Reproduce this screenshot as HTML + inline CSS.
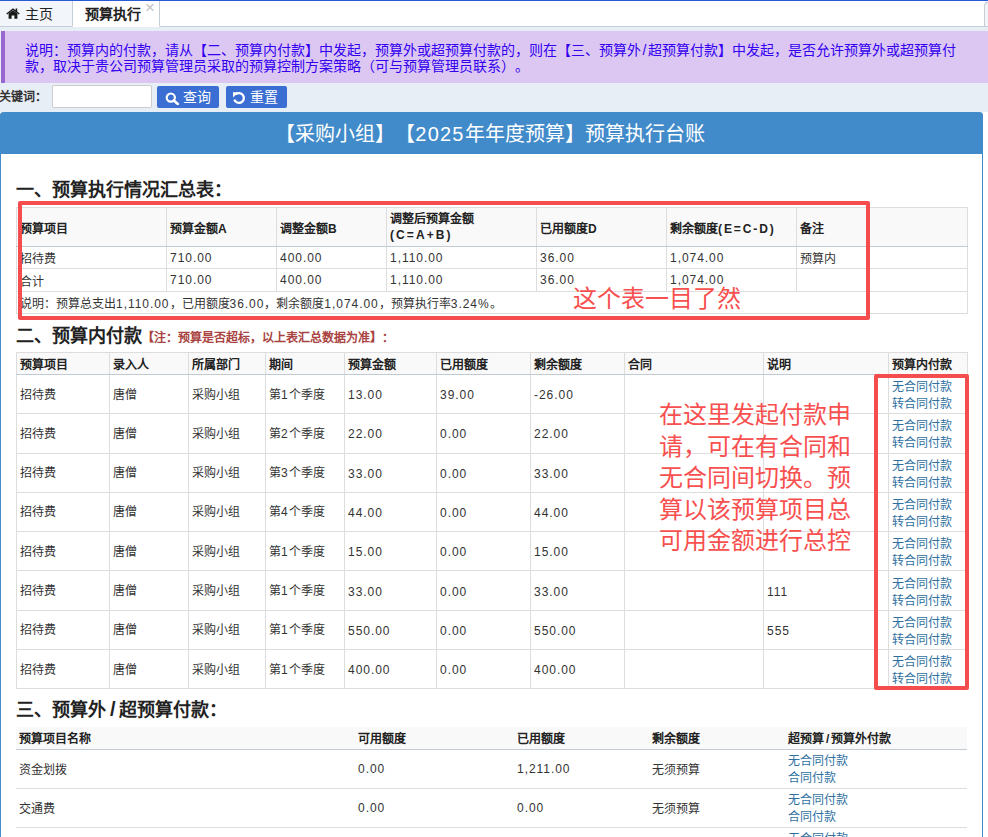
<!DOCTYPE html>
<html lang="zh-CN">
<head>
<meta charset="utf-8">
<style>
*{box-sizing:border-box}
html,body{margin:0;padding:0}
body{text-spacing-trim:space-all;width:988px;height:837px;overflow:hidden;position:relative;background:#fff;font-family:"Liberation Sans",sans-serif;font-size:12px;color:#333}
.abs{position:absolute}
.n{letter-spacing:0.96px}
/* tab bar */
#tabbar{left:0;top:0;width:988px;height:27px;background:#e8eef5;border-top:1px solid #2a5bd7}
#tab-home{left:0;top:0;width:73px;height:26px;background:#f2f5f9;border-right:1px solid #c5ced6;border-bottom:1px solid #c5ced6;border-bottom-right-radius:2px;font-size:14px;line-height:26px;color:#222}
#tab-home .t{position:absolute;left:25px;top:0}
#tab-act{left:73px;top:0;width:86px;height:26px;background:#fff;font-size:14px;font-weight:bold;line-height:26px;color:#222}
#tab-act .t{position:absolute;left:12px;top:0}
#tab-act .x{position:absolute;left:72px;top:-6px;font-size:17px;color:#c4c4c4;font-weight:normal}
#tab-rest{left:159px;top:0;width:826px;height:26px;background:#fff;border-left:1px solid #c5ced6;border-bottom:1px solid #c5ced6;border-radius:0 0 2px 2px}
#tab-end{left:984px;top:1px;width:10px;height:25px;background:#f2f5f9;border-top:1px solid #c5ced6;border-left:1px solid #c5ced6;border-bottom:1px solid #c5ced6;border-top-left-radius:4px}
#strip{left:0;top:27px;width:988px;height:85px;background:#e8eef5}
/* notice */
#notice{left:1px;top:31px;width:987px;height:52px;background:#dcc7f3;border-left:4px solid #9a66cf;color:#3300f0;font-size:14px;line-height:16px;padding:11px 0 0 20px}
/* search */
#kw{left:-1px;top:85px;font-size:12px;font-weight:bold;line-height:24px;color:#333}
#kwin{left:52px;top:85px;width:100px;height:23px;background:#fff;border:1px solid #ccc;border-radius:2px}
.btn{top:86px;height:22px;background:#3a6ed2;border-radius:2px;color:#fff;font-size:14px;line-height:22px}
#b1{left:157px;width:62px}
#b2{left:226px;width:61px}
.btn .t{position:absolute;top:0}
/* panel */
#panel{left:0;top:112px;width:983px;height:740px;border:1px solid #428bca;border-top:none;border-radius:4px 4px 0 0;background:#fff}
#phead{left:0;top:112px;width:983px;height:42px;background:#428bca;border-radius:4px 4px 0 0;color:#fff;font-size:20px;line-height:45px;text-align:center;padding-right:3px}
h2{position:absolute;margin:0;font-size:18px;font-weight:bold;color:#222;line-height:20px;white-space:nowrap}
table{position:absolute;border-collapse:collapse;table-layout:fixed;font-size:12px;color:#333}
td,th{padding:0 0 0 3px;text-align:left;vertical-align:middle;white-space:nowrap;overflow:hidden}
th{font-weight:bold;color:#222}
.tb td,.tb th{border:1px solid #dddddd}
.tb thead th{background:#f9f9f9;border-bottom:1px solid #c2cbd4}
a{color:#30709f;text-decoration:none}
.t3 th{background:#f9f9f9;border-bottom:1px solid #c2cbd4}
.t3 .lk a{top:1px}
.t3 td{border-bottom:1px solid #dddddd}
.lk{line-height:17px}
.t2 td{padding-bottom:2px}
.t2 td.n{padding-bottom:0;padding-top:2px}
.lk a{position:relative;top:3px}
.red{color:#f84f4f;font-size:24px;line-height:31.6px}
.rbox{position:absolute;border:4px solid #f54d4d;border-radius:2px}
</style>
</head>
<body>
<div id="tabbar" class="abs">
  <div id="tab-home" class="abs">
    <svg class="abs" style="left:6px;top:7px" width="14" height="11" viewBox="0 0 14 11"><path d="M7 0.2 L0.3 5.6 L1.2 6.6 L7 2 L12.8 6.6 L13.7 5.6 L11.2 3.6 L11.2 0.6 L9.6 0.6 L9.6 2.3 Z" fill="#1a1a1a"/><path d="M2.6 5.6 L7 2.2 L11.4 5.6 L11.4 10.8 L8.4 10.8 L8.4 7.4 L5.6 7.4 L5.6 10.8 L2.6 10.8 Z" fill="#1a1a1a"/></svg>
    <span class="t">主页</span>
  </div>
  <div id="tab-act" class="abs"><span class="t">预算执行</span><span class="x">×</span></div>
  <div id="tab-rest" class="abs"></div>
  <div id="tab-end" class="abs"></div>
</div>
<div id="strip" class="abs"></div>
<div id="notice" class="abs">说明：预算内的付款，请从【二、预算内付款】中发起，预算外或超预算付款的，则在【三、预算外<span style="padding:0 1.5px">/</span>超预算付款】中发起，是否允许预算外或超预算付<br>款，取决于贵公司预算管理员采取的预算控制方案策略（可与预算管理员联系）。</div>
<div id="kw" class="abs">关键词：</div>
<div id="kwin" class="abs"></div>
<div id="b1" class="abs btn">
  <svg class="abs" style="left:8px;top:6px" width="15" height="13" viewBox="0 0 15 13"><circle cx="5.8" cy="5.6" r="4.1" fill="none" stroke="#fff" stroke-width="2.2"/><path d="M8.8 8.6 L12.8 12" stroke="#fff" stroke-width="2.6" stroke-linecap="round"/></svg>
  <span class="t" style="left:26px">查询</span>
</div>
<div id="b2" class="abs btn">
  <svg class="abs" style="left:6px;top:5px" width="14" height="14" viewBox="0 0 14 14"><path d="M3.6 3.4 A4.9 4.9 0 1 1 2.3 8.6" fill="none" stroke="#fff" stroke-width="2.3"/><path d="M1 1.2 L6.4 1.2 L1 6.6 Z" fill="#fff"/></svg>
  <span class="t" style="left:24px">重置</span>
</div>

<div id="panel" class="abs"></div>
<div id="phead" class="abs">【采购小组】【<span style="letter-spacing:1.2px">2025</span>年年度预算】预算执行台账</div>

<h2 style="left:16px;top:180px">一、预算执行情况汇总表：</h2>

<table class="tb" style="left:16px;top:207px;width:951px">
<colgroup><col style="width:150px"><col style="width:110px"><col style="width:110px"><col style="width:150px"><col style="width:130px"><col style="width:130px"><col style="width:171px"></colgroup>
<thead><tr style="height:39px"><th>预算项目</th><th>预算金额A</th><th>调整金额B</th><th style="line-height:16px">调整后预算金额<br><span style="letter-spacing:2.1px">(C=A+B)</span></th><th>已用额度D</th><th>剩余额度<span style="letter-spacing:1.9px">(E=C-D)</span></th><th>备注</th></tr></thead>
<tbody>
<tr style="height:22px"><td>招待费</td><td class="n">710.00</td><td class="n">400.00</td><td class="n">1,110.00</td><td class="n">36.00</td><td class="n">1,074.00</td><td>预算内</td></tr>
<tr style="height:23px"><td>合计</td><td class="n">710.00</td><td class="n">400.00</td><td class="n">1,110.00</td><td class="n">36.00</td><td class="n">1,074.00</td><td></td></tr>
<tr style="height:22px"><td colspan="7">说明：预算总支出<span class="n">1,110.00</span>，已用额度<span class="n">36.00</span>，剩余额度<span class="n">1,074.00</span>，预算执行率<span class="n">3.24%</span>。</td></tr>
</tbody>
</table>
<div class="rbox" style="left:18px;top:201px;width:852px;height:119px"></div>
<div class="abs red" style="left:573px;top:283px">这个表一目了然</div>

<h2 style="left:16px;top:326px">二、预算内付款<span style="font-size:12px;color:#a94442;margin-left:0px">【注：预算是否超标，以上表汇总数据为准】：</span></h2>

<table class="tb t2" style="left:16px;top:352px;width:951px">
<colgroup><col style="width:93px"><col style="width:79px"><col style="width:77px"><col style="width:79px"><col style="width:92px"><col style="width:94px"><col style="width:94px"><col style="width:139px"><col style="width:125px"><col style="width:79px"></colgroup>
<thead><tr style="height:22px"><th>预算项目</th><th>录入人</th><th>所属部门</th><th>期间</th><th>预算金额</th><th>已用额度</th><th>剩余额度</th><th>合同</th><th>说明</th><th>预算内付款</th></tr></thead>
<tbody>
<tr style="height:39.29px"><td>招待费</td><td>唐僧</td><td>采购小组</td><td>第<span class="n">1</span>个季度</td><td class="n">13.00</td><td class="n">39.00</td><td class="n">-26.00</td><td></td><td class="n"></td><td class="lk"><a>无合同付款</a><br><a>转合同付款</a></td></tr>
<tr style="height:39.29px"><td>招待费</td><td>唐僧</td><td>采购小组</td><td>第<span class="n">2</span>个季度</td><td class="n">22.00</td><td class="n">0.00</td><td class="n">22.00</td><td></td><td class="n"></td><td class="lk"><a>无合同付款</a><br><a>转合同付款</a></td></tr>
<tr style="height:39.29px"><td>招待费</td><td>唐僧</td><td>采购小组</td><td>第<span class="n">3</span>个季度</td><td class="n">33.00</td><td class="n">0.00</td><td class="n">33.00</td><td></td><td class="n"></td><td class="lk"><a>无合同付款</a><br><a>转合同付款</a></td></tr>
<tr style="height:39.29px"><td>招待费</td><td>唐僧</td><td>采购小组</td><td>第<span class="n">4</span>个季度</td><td class="n">44.00</td><td class="n">0.00</td><td class="n">44.00</td><td></td><td class="n"></td><td class="lk"><a>无合同付款</a><br><a>转合同付款</a></td></tr>
<tr style="height:39.29px"><td>招待费</td><td>唐僧</td><td>采购小组</td><td>第<span class="n">1</span>个季度</td><td class="n">15.00</td><td class="n">0.00</td><td class="n">15.00</td><td></td><td class="n"></td><td class="lk"><a>无合同付款</a><br><a>转合同付款</a></td></tr>
<tr style="height:39.29px"><td>招待费</td><td>唐僧</td><td>采购小组</td><td>第<span class="n">1</span>个季度</td><td class="n">33.00</td><td class="n">0.00</td><td class="n">33.00</td><td></td><td class="n">111</td><td class="lk"><a>无合同付款</a><br><a>转合同付款</a></td></tr>
<tr style="height:39.29px"><td>招待费</td><td>唐僧</td><td>采购小组</td><td>第<span class="n">1</span>个季度</td><td class="n">550.00</td><td class="n">0.00</td><td class="n">550.00</td><td></td><td class="n">555</td><td class="lk"><a>无合同付款</a><br><a>转合同付款</a></td></tr>
<tr style="height:39.29px"><td>招待费</td><td>唐僧</td><td>采购小组</td><td>第<span class="n">1</span>个季度</td><td class="n">400.00</td><td class="n">0.00</td><td class="n">400.00</td><td></td><td class="n"></td><td class="lk"><a>无合同付款</a><br><a>转合同付款</a></td></tr>
</tbody>
</table>
<div class="rbox" style="left:874px;top:374px;width:95px;height:316px"></div>
<div class="abs red" style="left:659px;top:399px">在这里发起付款申<br>请，可在有合同和<br>无合同间切换。预<br>算以该预算项目总<br>可用金额进行总控</div>

<h2 style="left:16px;top:699px">三、预算外<span style="padding:0 3px 0 4px;font-size:20px">/</span>超预算付款：</h2>
<table class="t3" style="left:16px;top:727px;width:951px">
<colgroup><col style="width:339px"><col style="width:159px"><col style="width:135px"><col style="width:136px"><col style="width:182px"></colgroup>
<thead><tr style="height:22px"><th>预算项目名称</th><th>可用额度</th><th>已用额度</th><th>剩余额度</th><th>超预算<span style="padding:0 2px">/</span>预算外付款</th></tr></thead>
<tbody>
<tr style="height:39px"><td>资金划拨</td><td class="n">0.00</td><td class="n">1,211.00</td><td>无须预算</td><td class="lk"><a>无合同付款</a><br><a>合同付款</a></td></tr>
<tr style="height:39px"><td>交通费</td><td class="n">0.00</td><td class="n">0.00</td><td>无须预算</td><td class="lk"><a>无合同付款</a><br><a>合同付款</a></td></tr>
<tr style="height:39px"><td>办公费</td><td class="n">0.00</td><td class="n">0.00</td><td>无须预算</td><td class="lk"><a>无合同付款</a><br><a>合同付款</a></td></tr>
</tbody>
</table>
</body>
</html>
